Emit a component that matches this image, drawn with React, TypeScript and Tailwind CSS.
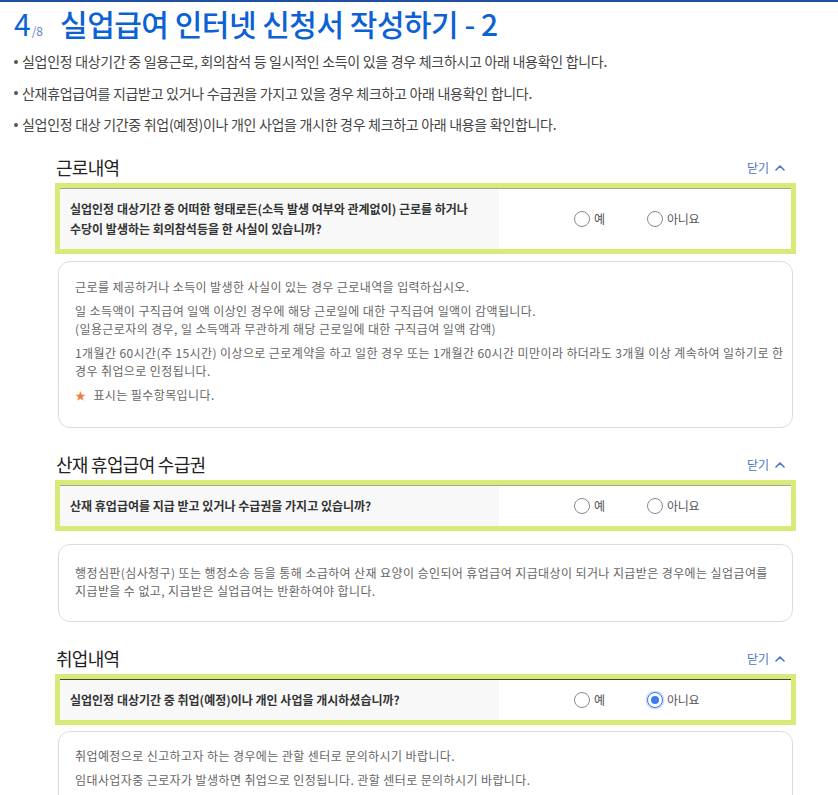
import { ReactNode } from 'react'

// Step 4 of the unemployment-benefit online application form.

const FONT = "font-['Noto_Sans_CJK_KR','Noto_Sans',sans-serif]"

function Radio({ label, checked = false }: { label: string; checked?: boolean }) {
  return (
    <label className="flex items-center gap-[4px] text-[12px] text-[#555] tracking-[-0.3px]">
      {checked ? (
        <span className="w-4 h-4 rounded-full border-[1.5px] border-[#3a78e6] bg-white flex items-center justify-center shadow-[0_0_0_1.5px_#cfe0fb]">
          <span className="block w-[8px] h-[8px] rounded-full bg-[#3a7cf0]" />
        </span>
      ) : (
        <span className="w-4 h-4 rounded-full border border-[#8a8a8a] bg-white" />
      )}
      <span>{label}</span>
    </label>
  )
}

function Section({
  title,
  question,
  answer,
  dark = false,
  gap,
  children,
  className,
  infoClass,
}: {
  title: string
  question: ReactNode
  answer: 'yes' | 'no' | null
  dark?: boolean
  gap: string
  children: ReactNode
  className: string
  infoClass: string
}) {
  return (
    <section className={className}>
      {/* Title row with collapse toggle */}
      <div className="flex items-center justify-between h-[26px] mb-[2px]">
        <h2 className="text-[18px] text-[#222] tracking-[-0.7px] pl-[1px]">{title}</h2>
        <button className="flex items-center gap-[5px] mr-[10px] text-[12px] text-[#4d74c6]">
          닫기
          <svg width="12" height="12" viewBox="0 0 12 12" fill="none" stroke="#4d74c6" strokeWidth="1.6" strokeLinecap="round" strokeLinejoin="round">
            <polyline points="2,8 6,4 10,8" />
          </svg>
        </button>
      </div>

      {/* Question row */}
      <div className="border-[5px] border-[#d8eb78]">
        <div className={`flex border-t ${dark ? 'border-[#444]' : 'border-[#a3a3a3]'}`}>
          <div className="w-[439px] bg-[#f8f8f8] px-[10px] py-[10px] text-[12px] leading-[20px] font-semibold text-[#333]">
            {question}
          </div>
          <div className="flex-1 flex items-center pl-[75px] bg-white">
            <div className="w-[73px]">
              <Radio label="예" checked={answer === 'yes'} />
            </div>
            <Radio label="아니요" checked={answer === 'no'} />
          </div>
        </div>
      </div>

      {/* Guidance box */}
      <div
        className={`${gap} mx-[3px] rounded-[12px] border border-[#dcdcdc] px-[16px] text-[12px] leading-[18px] text-[#666] tracking-[0.4px] flex flex-col gap-[6px] ${infoClass}`}
      >
        {children}
      </div>
    </section>
  )
}

export default function App() {
  return (
    <div className={`w-[838px] min-h-[795px] bg-white ${FONT}`}>
      <div className="h-[2px] bg-[#1f4fa3]" />

      <div className="px-[14px]">
        <h1 className="mt-[3px] h-[36px] flex items-baseline leading-[36px] text-[#0c62d4]">
          <span className="text-[30px]">4</span>
          <span className="text-[12px] text-[#5d85c9] ml-[1px]">/8</span>
          <span className="ml-[17px] text-[30px] font-medium tracking-[-0.5px]">실업급여 인터넷 신청서 작성하기 - 2</span>
        </h1>

        <ul className="mt-[5px] text-[14px] leading-[31.5px] text-[#444] tracking-[-0.3px]">
          {[
            '실업인정 대상기간 중 일용근로, 회의참석 등 일시적인 소득이 있을 경우 체크하시고 아래 내용확인 합니다.',
            '산재휴업급여를 지급받고 있거나 수급권을 가지고 있을 경우 체크하고 아래 내용확인 합니다.',
            '실업인정 대상 기간중 취업(예정)이나 개인 사업을 개시한 경우 체크하고 아래 내용을 확인합니다.',
          ].map((t) => (
            <li key={t} className="flex items-center">
              <span className="w-[4px] h-[4px] rounded-full bg-[#555] mr-[4px]" />
              {t}
            </li>
          ))}
        </ul>
      </div>

      <div className="pl-[55px] pr-[42px]">
        <Section
          className="mt-[14px]"
          title="근로내역"
          answer={null}
          gap="mt-[7px]"
          infoClass="pt-[16px] pb-[23px]"
          question={
            <>
              실업인정 대상기간 중 어떠한 형태로든(소득 발생 여부와 관계없이) 근로를 하거나
              <br />
              수당이 발생하는 회의참석등을 한 사실이 있습니까?
            </>
          }
        >
          <p>근로를 제공하거나 소득이 발생한 사실이 있는 경우 근로내역을 입력하십시오.</p>
          <p>
            일 소득액이 구직급여 일액 이상인 경우에 해당 근로일에 대한 구직급여 일액이 감액됩니다.
            <br />
            (일용근로자의 경우, 일 소득액과 무관하게 해당 근로일에 대한 구직급여 일액 감액)
          </p>
          <p className="whitespace-nowrap">
            1개월간 60시간(주 15시간) 이상으로 근로계약을 하고 일한 경우 또는 1개월간 60시간 미만이라 하더라도 3개월 이상 계속하여 일하기로 한
            <br />
            경우 취업으로 인정됩니다.
          </p>
          <p className="flex items-center gap-[7px]">
            <span className="text-[#f07f3c] text-[11px]">★</span>
            표시는 필수항목입니다.
          </p>
        </Section>

        <Section
          className="mt-[24px]"
          title="산재 휴업급여 수급권"
          answer={null}
          gap="mt-[13px]"
          infoClass="pt-[19px] pb-[21px]"
          question="산재 휴업급여를 지급 받고 있거나 수급권을 가지고 있습니까?"
        >
          <p className="whitespace-nowrap">
            행정심판(심사청구) 또는 행정소송 등을 통해 소급하여 산재 요양이 승인되어 휴업급여 지급대상이 되거나 지급받은 경우에는 실업급여를
            <br />
            지급받을 수 없고, 지급받은 실업급여는 반환하여야 합니다.
          </p>
        </Section>

        <Section
          className="mt-[24px]"
          title="취업내역"
          answer="no"
          dark
          gap="mt-[6px]"
          infoClass="pt-[15px] pb-[20px]"
          question="실업인정 대상기간 중 취업(예정)이나 개인 사업을 개시하셨습니까?"
        >
          <p>취업예정으로 신고하고자 하는 경우에는 관할 센터로 문의하시기 바랍니다.</p>
          <p>임대사업자중 근로자가 발생하면 취업으로 인정됩니다. 관할 센터로 문의하시기 바랍니다.</p>
        </Section>
      </div>
    </div>
  )
}
